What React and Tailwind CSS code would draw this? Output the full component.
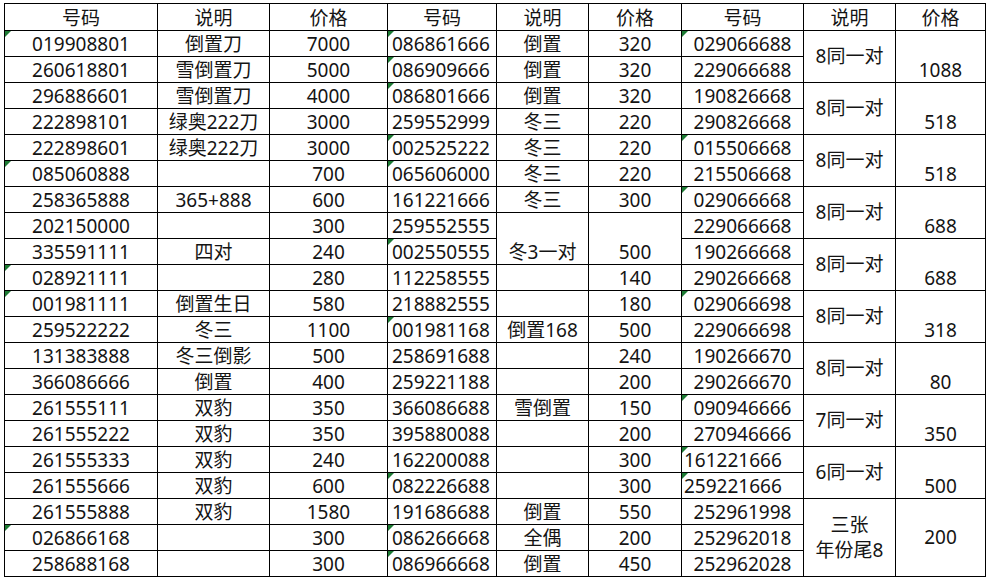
import React from "react";

const header = ["号码", "说明", "价格", "号码", "说明", "价格", "号码", "说明", "价格"];

// one entry per grid cell, row by row; cells covered by a row-span are left out
const rows = [
  ["019908801", "倒置刀", "7000", "086861666", "倒置", "320", "029066688", { t: "8同一对", span: 2, mid: true }, { t: "1088", span: 2 }],
  ["260618801", "雪倒置刀", "5000", "086909666", "倒置", "320", "229066688"],
  ["296886601", "雪倒置刀", "4000", "086801666", "倒置", "320", "190826668", { t: "8同一对", span: 2, mid: true }, { t: "518", span: 2 }],
  ["222898101", "绿奥222刀", "3000", "259552999", "冬三", "220", "290826668"],
  ["222898601", "绿奥222刀", "3000", "002525222", "冬三", "220", "015506668", { t: "8同一对", span: 2, mid: true }, { t: "518", span: 2 }],
  ["085060888", "", "700", "065606000", "冬三", "220", "215506668"],
  ["258365888", "365+888", "600", "161221666", "冬三", "300", "029066668", { t: "8同一对", span: 2, mid: true }, { t: "688", span: 2 }],
  ["202150000", "", "300", "259552555", { t: "冬3一对", span: 2 }, { t: "500", span: 2 }, "229066668"],
  ["335591111", "四对", "240", "002550555", "190266668", { t: "8同一对", span: 2, mid: true }, { t: "688", span: 2 }],
  ["028921111", "", "280", "112258555", "", "140", "290266668"],
  ["001981111", "倒置生日", "580", "218882555", "", "180", "029066698", { t: "8同一对", span: 2, mid: true }, { t: "318", span: 2 }],
  ["259522222", "冬三", "1100", "001981168", "倒置168", "500", "229066698"],
  ["131383888", "冬三倒影", "500", "258691688", "", "240", "190266670", { t: "8同一对", span: 2, mid: true }, { t: "80", span: 2 }],
  ["366086666", "倒置", "400", "259221188", "", "200", "290266670"],
  ["261555111", "双豹", "350", "366086688", "雪倒置", "150", "090946666", { t: "7同一对", span: 2, mid: true }, { t: "350", span: 2 }],
  ["261555222", "双豹", "350", "395880088", "", "200", "270946666"],
  ["261555333", "双豹", "240", "162200088", "", "300", { t: "161221666", left: true, tri: true }, { t: "6同一对", span: 2, mid: true }, { t: "500", span: 2 }],
  ["261555666", "双豹", "600", "082226688", "", "300", { t: "259221666", left: true, tri: true }],
  ["261555888", "双豹", "1580", "191686688", "倒置", "550", "252961998", { t: "三张\n年份尾8", span: 3, mid: true }, { t: "200", span: 3, mid: true }],
  ["026866168", "", "300", "086266668", "全偶", "200", "252962018"],
  ["258688168", "", "300", "086966668", "倒置", "450", "252962028"],
];

function Cell({ cell, leftCol }) {
  const c = typeof cell === "string" ? { t: cell } : cell;
  const isNum = /^\d{9}$/.test(c.t);
  const tri = c.tri || (isNum && c.t.startsWith("0"));
  const left = c.left || leftCol;
  return (
    <div
      className={
        "relative flex bg-white leading-[21px] whitespace-pre-line text-center " +
        (c.mid ? "items-center " : "items-end pb-px ") +
        (left ? (leftCol ? "justify-start pl-[4px] " : "justify-start pl-[2px] ") : "justify-center ") +
        (c.span === 2 ? "row-span-2 " : c.span === 3 ? "row-span-3 leading-[25px] " : "")
      }
    >
      {tri && (
        <span className="absolute left-0 top-0 w-[6px] h-[6px] bg-[#1d7b34] [clip-path:polygon(0_0,100%_0,0_100%)]" />
      )}
      {c.t}
    </div>
  );
}

export default function App() {
  return (
    <div className="w-[992px] h-[580px] bg-white pt-[3px] pl-[4px] text-[19px] text-[#141414] font-['Noto_Sans','Noto_Sans_CJK_SC',sans-serif]">
      <div className="grid w-fit gap-px bg-black p-px grid-cols-[152px_111px_117px_108px_91px_92px_121px_91px_89px] grid-rows-[26px_repeat(21,25px)]">
        {header.map((h, i) => (
          <div key={"h" + i} className="flex items-end justify-center bg-white pb-px leading-[21px]">
            {h}
          </div>
        ))}
        {rows.map((r, ri) =>
          r.map((cell, ci) => {
            const t = typeof cell === "string" ? cell : cell.t;
            // 4th column numbers sit on the left; nothing before it is ever spanned over
            const leftCol = ci === 3 && /^\d{9}$/.test(t);
            return <Cell key={ri + "-" + ci} cell={cell} leftCol={leftCol} />;
          })
        )}
      </div>
    </div>
  );
}
